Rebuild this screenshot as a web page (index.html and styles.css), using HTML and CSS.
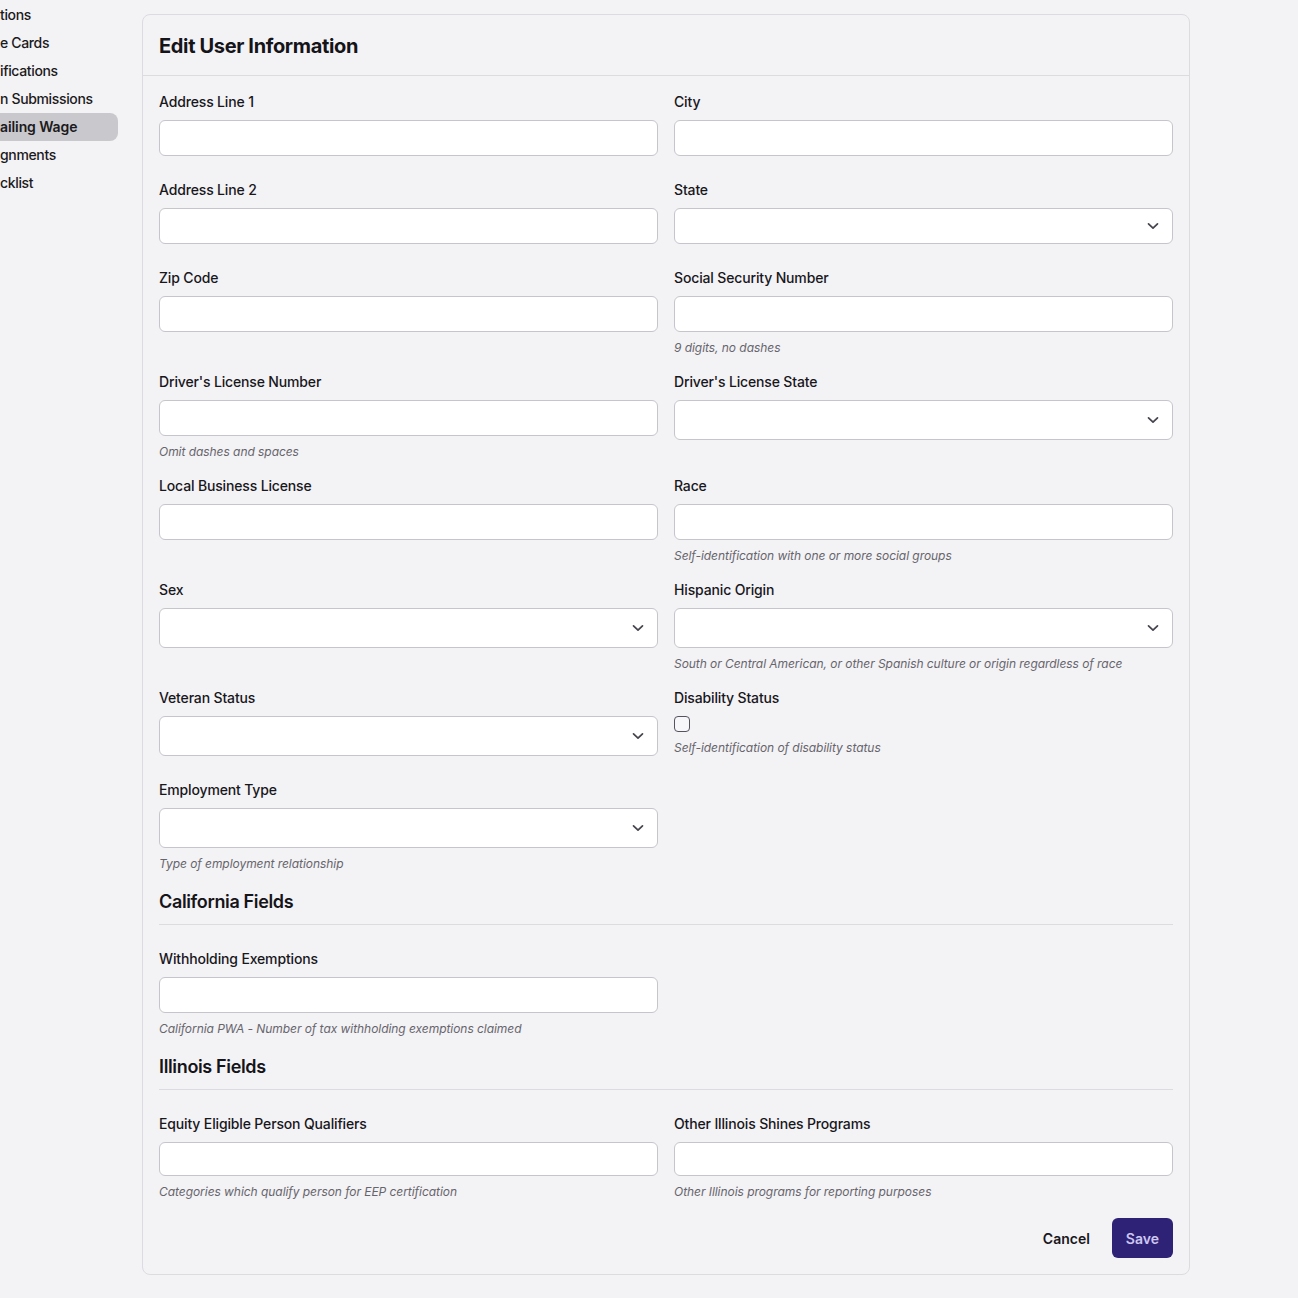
FILE: index.html
```html
<!DOCTYPE html>
<html lang="en">
<head>
<meta charset="utf-8">
<title>Edit User Information</title>
<link rel="stylesheet" href="styles.css">
</head>
<body>
<div class="layout">
  <aside class="sidebar">
    <nav class="nav">
      <a class="nav-item">tions</a>
      <a class="nav-item">e Cards</a>
      <a class="nav-item">ifications</a>
      <a class="nav-item">n Submissions</a>
      <a class="nav-item active">ailing Wage</a>
      <a class="nav-item">gnments</a>
      <a class="nav-item">cklist</a>
    </nav>
  </aside>
  <main class="main">
    <section class="card">
      <header class="card-header"><h1>Edit User Information</h1></header>
      <form class="card-body">
        <div class="grid">
          <div class="field"><label>Address Line 1</label><div class="input"></div></div>
          <div class="field"><label>City</label><div class="input"></div></div>

          <div class="field"><label>Address Line 2</label><div class="input"></div></div>
          <div class="field"><label>State</label><div class="input select"><svg viewBox="0 0 12 8"><path d="M1.5 1.8 6 6.2l4.5-4.4"/></svg></div></div>

          <div class="field"><label>Zip Code</label><div class="input"></div></div>
          <div class="field"><label>Social Security Number</label><div class="input"></div><p class="help">9 digits, no dashes</p></div>

          <div class="field"><label>Driver's License Number</label><div class="input"></div><p class="help">Omit dashes and spaces</p></div>
          <div class="field"><label>Driver's License State</label><div class="input select tall"><svg viewBox="0 0 12 8"><path d="M1.5 1.8 6 6.2l4.5-4.4"/></svg></div></div>

          <div class="field"><label>Local Business License</label><div class="input"></div></div>
          <div class="field"><label>Race</label><div class="input"></div><p class="help">Self-identification with one or more social groups</p></div>

          <div class="field"><label>Sex</label><div class="input select tall"><svg viewBox="0 0 12 8"><path d="M1.5 1.8 6 6.2l4.5-4.4"/></svg></div></div>
          <div class="field"><label>Hispanic Origin</label><div class="input select tall"><svg viewBox="0 0 12 8"><path d="M1.5 1.8 6 6.2l4.5-4.4"/></svg></div><p class="help">South or Central American, or other Spanish culture or origin regardless of race</p></div>

          <div class="field"><label>Veteran Status</label><div class="input select tall"><svg viewBox="0 0 12 8"><path d="M1.5 1.8 6 6.2l4.5-4.4"/></svg></div></div>
          <div class="field"><label>Disability Status</label><span class="checkbox"></span><p class="help">Self-identification of disability status</p></div>

          <div class="field"><label>Employment Type</label><div class="input select tall"><svg viewBox="0 0 12 8"><path d="M1.5 1.8 6 6.2l4.5-4.4"/></svg></div><p class="help">Type of employment relationship</p></div>
          <div class="field"></div>

          <h2 class="section-title">California Fields</h2>

          <div class="field"><label>Withholding Exemptions</label><div class="input"></div><p class="help">California PWA - Number of tax withholding exemptions claimed</p></div>
          <div class="field"></div>

          <h2 class="section-title">Illinois Fields</h2>

          <div class="field"><label>Equity Eligible Person Qualifiers</label><div class="input short"></div><p class="help">Categories which qualify person for EEP certification</p></div>
          <div class="field"><label>Other Illinois Shines Programs</label><div class="input short"></div><p class="help">Other Illinois programs for reporting purposes</p></div>
        </div>
        <div class="actions">
          <button type="button" class="btn btn-cancel">Cancel</button>
          <button type="button" class="btn btn-save">Save</button>
        </div>
      </form>
    </section>
  </main>
</div>
</body>
</html>
```

FILE: styles.css
```css
* { box-sizing: border-box; }
html, body { margin: 0; padding: 0; }
body {
  background: #f3f2f5;
  font-family: Inter, "Noto Sans", "Liberation Sans", sans-serif;
  color: #18171c;
  font-size: 14px;
}
.layout {
  display: flex;
  align-items: flex-start;
  gap: 24px;
}
.sidebar {
  width: 118px;
  flex: none;
  padding-top: 1px;
}
.nav {
  display: flex;
  flex-direction: column;
}
.nav-item {
  display: block;
  height: 28px;
  line-height: 28px;
  font-size: 14px;
  font-weight: 500;
  letter-spacing: -0.35px;
  color: #1b1a20;
  white-space: nowrap;
}
.nav-item.active {
  background: #c9c8cc;
  font-weight: 600;
  letter-spacing: -0.1px;
  border-radius: 0 8px 8px 0;
}
.main {
  flex: none;
  width: 1048px;
  padding-top: 14px;
}
.card {
  border: 1px solid #dcdbe0;
  border-radius: 8px;
  background: #f3f2f5;
}
.card-header {
  padding: 16px;
  border-bottom: 1px solid #dcdbe0;
}
.card-header h1 {
  margin: 0;
  font-size: 20px;
  line-height: 28px;
  font-weight: 700;
  letter-spacing: -0.35px;
  color: #151419;
  position: relative;
  top: 1px;
}
.card-body {
  padding: 16px;
  margin: 0;
}
.grid {
  display: grid;
  grid-template-columns: 1fr 1fr;
  column-gap: 16px;
  row-gap: 16px;
  align-items: start;
}
.field {
  display: flex;
  flex-direction: column;
  align-items: stretch;
}
.field label {
  display: block;
  font-size: 14px;
  line-height: 20px;
  font-weight: 500;
  letter-spacing: -0.15px;
  color: #18171c;
  margin-bottom: 8px;
}
.input {
  height: 36px;
  background: #fff;
  border: 1px solid #c6c5cb;
  border-radius: 6px;
  margin-bottom: 8px;
  display: flex;
  align-items: center;
  justify-content: flex-end;
  padding-right: 13px;
}
.input.short { height: 34px; }
.input.tall { height: 40px; }
.input svg {
  width: 12px;
  height: 8px;
  fill: none;
  stroke: #46454d;
  stroke-width: 1.7;
  stroke-linecap: round;
  stroke-linejoin: round;
}
.checkbox {
  width: 16px;
  height: 16px;
  border: 1.5px solid #55545c;
  border-radius: 4px;
  background: #f7f6f9;
  margin-bottom: 8px;
}
.help {
  margin: 0;
  font-size: 12px;
  line-height: 16px;
  font-style: italic;
  color: #66656c;
  letter-spacing: -0.05px;
}
.section-title {
  grid-column: 1 / -1;
  margin: 0 0 8px;
  padding-bottom: 8px;
  border-bottom: 1px solid #dcdbe0;
  font-size: 18px;
  line-height: 28px;
  font-weight: 600;
  letter-spacing: -0.35px;
  color: #151419;
}
.actions {
  display: flex;
  justify-content: flex-end;
  align-items: center;
  gap: 6px;
  margin-top: 18px;
}
.btn {
  font-family: inherit;
  font-size: 14px;
  font-weight: 600;
  height: 40px;
  border: none;
  border-radius: 6px;
  cursor: pointer;
}
.btn-cancel {
  background: transparent;
  color: #18171c;
  padding: 0 16px;
}
.btn-save {
  background: #2d2275;
  color: #cdc7f2;
  padding: 0 14px;
}
```
